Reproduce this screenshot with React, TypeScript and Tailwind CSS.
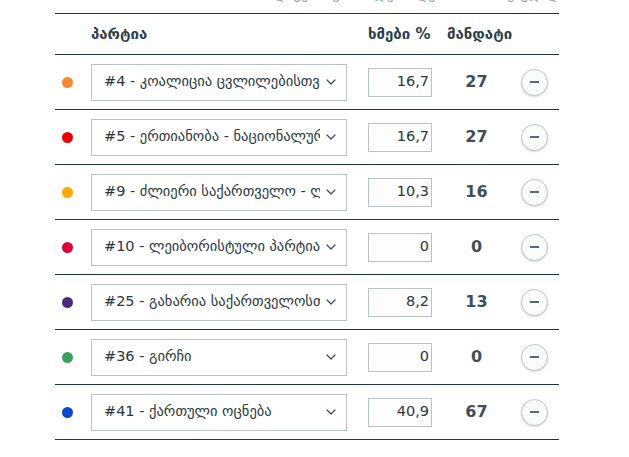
import React from 'react'

interface Party {
  color: string
  name: string
  votes: string
  seats: number
}

const parties: Party[] = [
  { color: '#f58a31', name: '#4 - კოალიცია ცვლილებისთვის', votes: '16,7', seats: 27 },
  { color: '#ec0008', name: '#5 - ერთიანობა - ნაციონალური მოძრაობა', votes: '16,7', seats: 27 },
  { color: '#f9a90e', name: '#9 - ძლიერი საქართველო - ლელო', votes: '10,3', seats: 16 },
  { color: '#e0003d', name: '#10 - ლეიბორისტული პარტია', votes: '0', seats: 0 },
  { color: '#4b2b78', name: '#25 - გახარია საქართველოსთვის', votes: '8,2', seats: 13 },
  { color: '#3aa15d', name: '#36 - გირჩი', votes: '0', seats: 0 },
  { color: '#0b47c9', name: '#41 - ქართული ოცნება', votes: '40,9', seats: 67 },
]

function Chevron() {
  return (
    <svg width="10" height="6" viewBox="0 0 10 6" fill="none" className="shrink-0">
      <path d="M1 1l4 4 4-4" stroke="#3b4a55" strokeWidth="1.2" strokeLinecap="round" strokeLinejoin="round" />
    </svg>
  )
}

export default function App() {
  return (
    <div className="bg-white w-[629px] h-[457px] overflow-hidden text-[#2d3e4b]" style={{ fontFamily: '"DejaVu Sans", "Noto Sans", sans-serif' }}>
      <div className="h-[13px] overflow-hidden flex justify-end pr-[70px]">
        <p className="-mt-[15px] text-[13px] text-[#8a959d] whitespace-nowrap">მანდატების განაწილება ხდება პროპორციულად</p>
      </div>
      <div className="ml-[55px] w-[504px] border-t border-[#1d3442]">
        <div className="flex items-center h-[41px] border-b border-[#1d3442] font-bold text-[15px]">
          <div className="w-[36px]" />
          <div className="w-[277px]">პარტია</div>
          <div className="w-[79px] whitespace-nowrap">ხმები %</div>
          <div className="whitespace-nowrap">მანდატი</div>
        </div>
        {parties.map((p) => (
          <div key={p.name} className="flex items-center h-[55px] border-b border-[#1d3442]">
            <div className="w-[36px] flex pl-[7px]">
              <span className="w-[11px] h-[11px] rounded-full" style={{ backgroundColor: p.color }} />
            </div>
            <div className="w-[256px] h-[37px] border border-[#b9c2c6] flex items-center pl-[12px] pr-[10px] gap-[6px]">
              <span className="flex-1 overflow-hidden whitespace-nowrap text-[14.5px] text-[#2a3640]">{p.name}</span>
              <Chevron />
            </div>
            <div className="w-[21px]" />
            <div className="w-[64px] h-[29px] border border-[#b9c2c6] bg-[#fdfdfd] flex items-center justify-end pr-[2px] text-[14.5px] text-[#2a3640]">
              {p.votes}
            </div>
            <div className="w-[89px] text-center font-bold text-[16px] text-[#3e4f5b]">{p.seats}</div>
            <div className="w-[27px] h-[27px] rounded-full border border-[#bcc5ca] bg-[#fafbfb] shadow-[0_1px_2px_rgba(0,0,0,0.15)] flex items-center justify-center">
              <span className="w-[9px] h-[1.5px] bg-[#566a78]" />
            </div>
          </div>
        ))}
      </div>
    </div>
  )
}
